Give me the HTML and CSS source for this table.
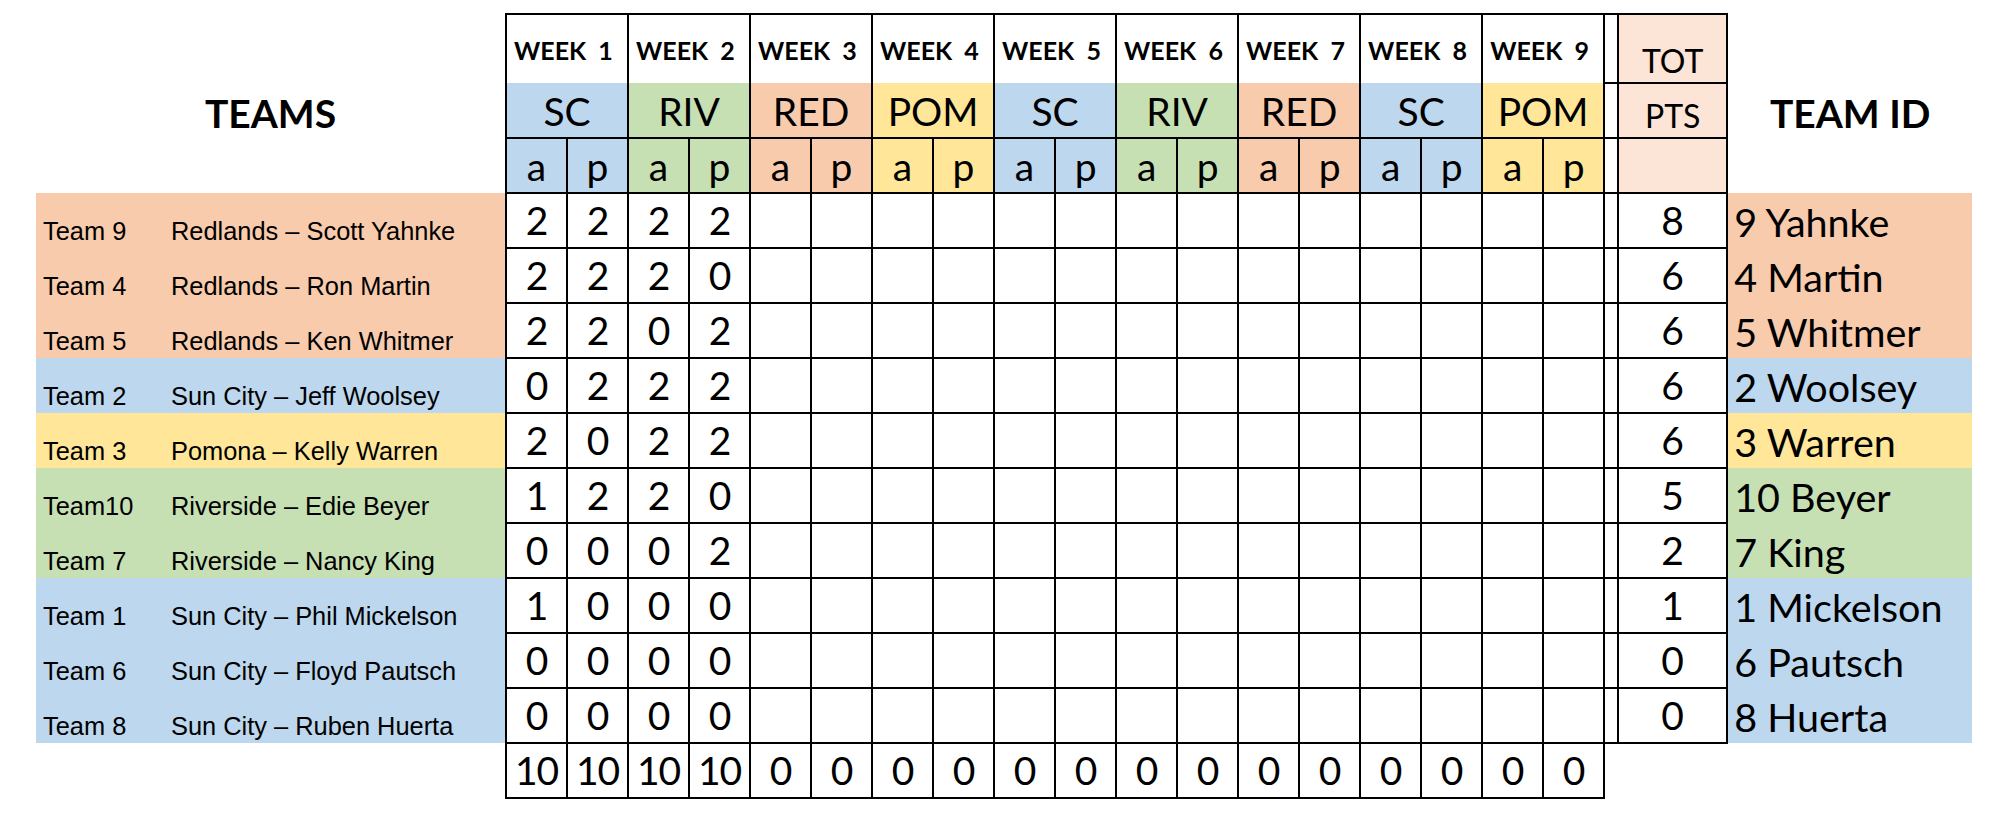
FILE: index.html
```
<!DOCTYPE html>
<html lang="en">
<head>
<meta charset="utf-8">
<title>Team Standings</title>
<link rel="stylesheet" href="styles.css">
</head>
<body>
<table class="sheet">
  <colgroup>
    <col class="c-team"><col class="c-name">
    <col class="c-ap"><col class="c-ap"><col class="c-ap"><col class="c-ap"><col class="c-ap"><col class="c-ap">
    <col class="c-ap"><col class="c-ap"><col class="c-ap"><col class="c-ap"><col class="c-ap"><col class="c-ap">
    <col class="c-ap"><col class="c-ap"><col class="c-ap"><col class="c-ap"><col class="c-ap"><col class="c-ap">
    <col class="c-gap"><col class="c-tot"><col class="c-id">
  </colgroup>
  <tbody>
    <tr class="r-week">
      <td class="blank" colspan="2"></td>
      <td class="wk" colspan="2">WEEK  1</td>
      <td class="wk" colspan="2">WEEK  2</td>
      <td class="wk" colspan="2">WEEK  3</td>
      <td class="wk" colspan="2">WEEK  4</td>
      <td class="wk" colspan="2">WEEK  5</td>
      <td class="wk" colspan="2">WEEK  6</td>
      <td class="wk" colspan="2">WEEK  7</td>
      <td class="wk" colspan="2">WEEK  8</td>
      <td class="wk" colspan="2">WEEK  9</td>
      <td class="gap"></td>
      <td class="tot peach">TOT</td>
      <td class="blank"></td>
    </tr>
    <tr class="r-row">
      <td class="head" colspan="2">TEAMS</td>
      <td class="site blue" colspan="2">SC</td>
      <td class="site green" colspan="2">RIV</td>
      <td class="site salmon" colspan="2">RED</td>
      <td class="site yellow" colspan="2">POM</td>
      <td class="site blue" colspan="2">SC</td>
      <td class="site green" colspan="2">RIV</td>
      <td class="site salmon" colspan="2">RED</td>
      <td class="site blue" colspan="2">SC</td>
      <td class="site yellow" colspan="2">POM</td>
      <td class="gap"></td>
      <td class="tot pts-h peach">PTS</td>
      <td class="head">TEAM ID</td>
    </tr>
    <tr class="r-row">
      <td class="blank" colspan="2"></td>
      <td class="ap blue">a</td><td class="ap blue">p</td>
      <td class="ap green">a</td><td class="ap green">p</td>
      <td class="ap salmon">a</td><td class="ap salmon">p</td>
      <td class="ap yellow">a</td><td class="ap yellow">p</td>
      <td class="ap blue">a</td><td class="ap blue">p</td>
      <td class="ap green">a</td><td class="ap green">p</td>
      <td class="ap salmon">a</td><td class="ap salmon">p</td>
      <td class="ap blue">a</td><td class="ap blue">p</td>
      <td class="ap yellow">a</td><td class="ap yellow">p</td>
      <td class="gap"></td>
      <td class="tot peach"></td>
      <td class="blank"></td>
    </tr>
    <tr class="r-row">
      <td class="lab lab-team salmon">Team 9</td><td class="lab lab-name salmon">Redlands – Scott Yahnke</td>
      <td class="num">2</td><td class="num">2</td><td class="num">2</td><td class="num">2</td>
      <td class="num"></td><td class="num"></td><td class="num"></td><td class="num"></td><td class="num"></td><td class="num"></td><td class="num"></td><td class="num"></td><td class="num"></td><td class="num"></td><td class="num"></td><td class="num"></td><td class="num"></td><td class="num"></td>
      <td class="gap"></td><td class="pts">8</td><td class="tid salmon">9 Yahnke</td>
    </tr>
    <tr class="r-row">
      <td class="lab lab-team salmon">Team 4</td><td class="lab lab-name salmon">Redlands – Ron Martin</td>
      <td class="num">2</td><td class="num">2</td><td class="num">2</td><td class="num">0</td>
      <td class="num"></td><td class="num"></td><td class="num"></td><td class="num"></td><td class="num"></td><td class="num"></td><td class="num"></td><td class="num"></td><td class="num"></td><td class="num"></td><td class="num"></td><td class="num"></td><td class="num"></td><td class="num"></td>
      <td class="gap"></td><td class="pts">6</td><td class="tid salmon">4 Martin</td>
    </tr>
    <tr class="r-row">
      <td class="lab lab-team salmon">Team 5</td><td class="lab lab-name salmon">Redlands – Ken Whitmer</td>
      <td class="num">2</td><td class="num">2</td><td class="num">0</td><td class="num">2</td>
      <td class="num"></td><td class="num"></td><td class="num"></td><td class="num"></td><td class="num"></td><td class="num"></td><td class="num"></td><td class="num"></td><td class="num"></td><td class="num"></td><td class="num"></td><td class="num"></td><td class="num"></td><td class="num"></td>
      <td class="gap"></td><td class="pts">6</td><td class="tid salmon">5 Whitmer</td>
    </tr>
    <tr class="r-row">
      <td class="lab lab-team blue">Team 2</td><td class="lab lab-name blue">Sun City – Jeff Woolsey</td>
      <td class="num">0</td><td class="num">2</td><td class="num">2</td><td class="num">2</td>
      <td class="num"></td><td class="num"></td><td class="num"></td><td class="num"></td><td class="num"></td><td class="num"></td><td class="num"></td><td class="num"></td><td class="num"></td><td class="num"></td><td class="num"></td><td class="num"></td><td class="num"></td><td class="num"></td>
      <td class="gap"></td><td class="pts">6</td><td class="tid blue">2 Woolsey</td>
    </tr>
    <tr class="r-row">
      <td class="lab lab-team yellow">Team 3</td><td class="lab lab-name yellow">Pomona – Kelly Warren</td>
      <td class="num">2</td><td class="num">0</td><td class="num">2</td><td class="num">2</td>
      <td class="num"></td><td class="num"></td><td class="num"></td><td class="num"></td><td class="num"></td><td class="num"></td><td class="num"></td><td class="num"></td><td class="num"></td><td class="num"></td><td class="num"></td><td class="num"></td><td class="num"></td><td class="num"></td>
      <td class="gap"></td><td class="pts">6</td><td class="tid yellow">3 Warren</td>
    </tr>
    <tr class="r-row">
      <td class="lab lab-team green">Team10</td><td class="lab lab-name green">Riverside – Edie Beyer</td>
      <td class="num">1</td><td class="num">2</td><td class="num">2</td><td class="num">0</td>
      <td class="num"></td><td class="num"></td><td class="num"></td><td class="num"></td><td class="num"></td><td class="num"></td><td class="num"></td><td class="num"></td><td class="num"></td><td class="num"></td><td class="num"></td><td class="num"></td><td class="num"></td><td class="num"></td>
      <td class="gap"></td><td class="pts">5</td><td class="tid green">10 Beyer</td>
    </tr>
    <tr class="r-row">
      <td class="lab lab-team green">Team 7</td><td class="lab lab-name green">Riverside – Nancy King</td>
      <td class="num">0</td><td class="num">0</td><td class="num">0</td><td class="num">2</td>
      <td class="num"></td><td class="num"></td><td class="num"></td><td class="num"></td><td class="num"></td><td class="num"></td><td class="num"></td><td class="num"></td><td class="num"></td><td class="num"></td><td class="num"></td><td class="num"></td><td class="num"></td><td class="num"></td>
      <td class="gap"></td><td class="pts">2</td><td class="tid green">7 King</td>
    </tr>
    <tr class="r-row">
      <td class="lab lab-team blue">Team 1</td><td class="lab lab-name blue">Sun City – Phil Mickelson</td>
      <td class="num">1</td><td class="num">0</td><td class="num">0</td><td class="num">0</td>
      <td class="num"></td><td class="num"></td><td class="num"></td><td class="num"></td><td class="num"></td><td class="num"></td><td class="num"></td><td class="num"></td><td class="num"></td><td class="num"></td><td class="num"></td><td class="num"></td><td class="num"></td><td class="num"></td>
      <td class="gap"></td><td class="pts">1</td><td class="tid blue">1 Mickelson</td>
    </tr>
    <tr class="r-row">
      <td class="lab lab-team blue">Team 6</td><td class="lab lab-name blue">Sun City – Floyd Pautsch</td>
      <td class="num">0</td><td class="num">0</td><td class="num">0</td><td class="num">0</td>
      <td class="num"></td><td class="num"></td><td class="num"></td><td class="num"></td><td class="num"></td><td class="num"></td><td class="num"></td><td class="num"></td><td class="num"></td><td class="num"></td><td class="num"></td><td class="num"></td><td class="num"></td><td class="num"></td>
      <td class="gap"></td><td class="pts">0</td><td class="tid blue">6 Pautsch</td>
    </tr>
    <tr class="r-row">
      <td class="lab lab-team blue">Team 8</td><td class="lab lab-name blue">Sun City – Ruben Huerta</td>
      <td class="num">0</td><td class="num">0</td><td class="num">0</td><td class="num">0</td>
      <td class="num"></td><td class="num"></td><td class="num"></td><td class="num"></td><td class="num"></td><td class="num"></td><td class="num"></td><td class="num"></td><td class="num"></td><td class="num"></td><td class="num"></td><td class="num"></td><td class="num"></td><td class="num"></td>
      <td class="gap"></td><td class="pts">0</td><td class="tid blue">8 Huerta</td>
    </tr>
    <tr class="r-row">
      <td class="blank" colspan="2"></td>
      <td class="num">10</td><td class="num">10</td><td class="num">10</td><td class="num">10</td>
      <td class="num">0</td><td class="num">0</td><td class="num">0</td><td class="num">0</td><td class="num">0</td><td class="num">0</td><td class="num">0</td><td class="num">0</td><td class="num">0</td><td class="num">0</td><td class="num">0</td><td class="num">0</td><td class="num">0</td><td class="num">0</td>
      <td class="blank"></td><td class="blank"></td><td class="blank"></td>
    </tr>
  </tbody>
</table>
</body>
</html>
```
FILE: styles.css
```
html, body {
  margin: 0;
  padding: 0;
  background: #ffffff;
}

body {
  padding-top: 13px;
  padding-left: 36px;
}

.sheet {
  border-collapse: collapse;
  table-layout: fixed;
  width: 1936px;
  font-family: Lato, "Open Sans", sans-serif;
  color: #000000;
}

.c-team { width: 130px; }
.c-name { width: 340px; }
.c-ap { width: 61px; }
.c-gap { width: 14px; }
.c-tot { width: 109px; }
.c-id { width: 245px; }

.r-week { height: 69px; }
.r-row { height: 55px; }

.sheet td {
  padding: 0;
  vertical-align: bottom;
  line-height: 1;
  white-space: pre;
  overflow: visible;
}

/* fills */
.salmon { background: #f8cbad; }
.blue { background: #bdd7ee; }
.yellow { background: #ffe699; }
.green { background: #c6e0b4; }
.peach { background: #fce4d6; }

/* week header row */
.sheet .wk {
  border-top: 2px solid #000;
  border-left: 2px solid #000;
  border-right: 2px solid #000;
  font-weight: 700;
  font-size: 25px;
  text-align: left;
  padding-left: 7px;
  padding-bottom: 20px;
}

.sheet .site {
  border-left: 2px solid #000;
  border-right: 2px solid #000;
  border-bottom: 2px solid #000;
  font-size: 39px;
  text-align: center;
  padding-bottom: 6px;
}

.sheet .ap {
  border: 2px solid #000;
  font-size: 39px;
  text-align: center;
  padding-bottom: 6px;
}

.sheet .num {
  border: 2px solid #000;
  font-size: 39px;
  text-align: center;
  padding-bottom: 7px;
  letter-spacing: -1px;
}

.sheet .gap {
  border: 2px solid #000;
}

.sheet .tot {
  border: 2px solid #000;
  font-size: 32px;
  text-align: center;
  padding-bottom: 5px;
}

.sheet .pts {
  border: 2px solid #000;
  font-size: 39px;
  text-align: center;
  padding-bottom: 7px;
}

.sheet .head {
  font-weight: 700;
  font-size: 39px;
  text-align: center;
  padding-bottom: 5px;
}

.sheet .lab {
  font-family: "Liberation Sans", Arial, sans-serif;
  font-size: 25.4px;
  padding-bottom: 4px;
}

.sheet .lab-team { padding-left: 7px; }
.sheet .lab-name { padding-left: 5px; }

.sheet .tid {
  font-size: 39.5px;
  padding-left: 6px;
  padding-bottom: 7px;
}
```
